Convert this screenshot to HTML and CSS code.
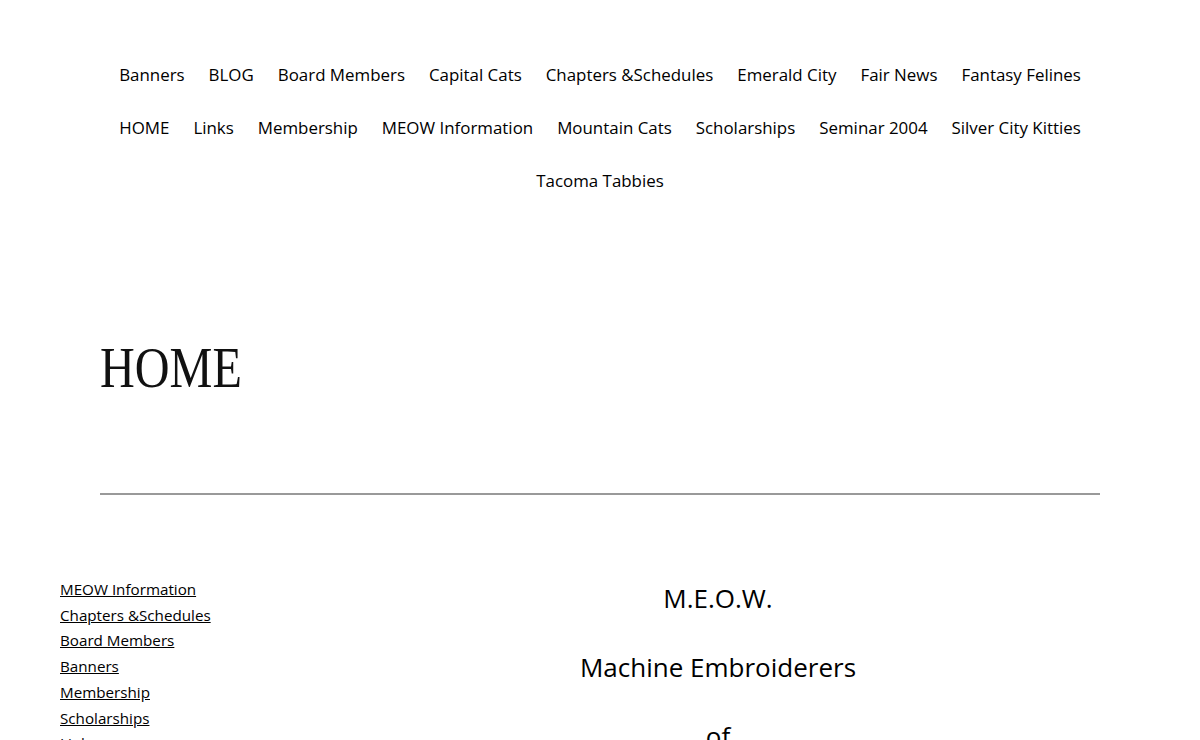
FILE: index.html
```html
<!DOCTYPE html>
<html lang="en">
<head>
<meta charset="utf-8">
<title>HOME</title>
<link rel="stylesheet" href="styles.css">
</head>
<body>
<header class="site-header">
  <nav class="main-nav">
    <ul class="nav-list">
      <li><a href="#">Banners</a></li>
      <li><a href="#">BLOG</a></li>
      <li><a href="#">Board Members</a></li>
      <li><a href="#">Capital Cats</a></li>
      <li><a href="#">Chapters &amp;Schedules</a></li>
      <li><a href="#">Emerald City</a></li>
      <li><a href="#">Fair News</a></li>
      <li><a href="#">Fantasy Felines</a></li>
      <li><a href="#">HOME</a></li>
      <li><a href="#">Links</a></li>
      <li><a href="#">Membership</a></li>
      <li><a href="#">MEOW Information</a></li>
      <li><a href="#">Mountain Cats</a></li>
      <li><a href="#">Scholarships</a></li>
      <li><a href="#">Seminar 2004</a></li>
      <li><a href="#">Silver City Kitties</a></li>
      <li><a href="#">Tacoma Tabbies</a></li>
    </ul>
  </nav>
</header>
<main>
  <div class="title-wrap">
    <h1 class="page-title">HOME</h1>
  </div>
  <hr class="separator">
  <div class="content">
    <ul class="side-links">
      <li><a href="#">MEOW Information</a></li>
      <li><a href="#">Chapters &amp;Schedules</a></li>
      <li><a href="#">Board Members</a></li>
      <li><a href="#">Banners</a></li>
      <li><a href="#">Membership</a></li>
      <li><a href="#">Scholarships</a></li>
      <li><a href="#">Links</a></li>
      <li><a href="#">HOME</a></li>
    </ul>
    <div class="intro">
      <p>M.E.O.W.</p>
      <p>Machine Embroiderers</p>
      <p>of</p>
      <p>Washington</p>
    </div>
  </div>
</main>
</body>
</html>
```
FILE: styles.css
```css
html, body {
  margin: 0;
  padding: 0;
  background: #ffffff;
  color: #000000;
  font-family: "Open Sans", "Noto Sans", sans-serif;
}

a {
  color: #000000;
}

.site-header {
  padding-top: 62px;
}

.main-nav {
  width: 1000px;
  margin: 0 auto;
}

.nav-list {
  list-style: none;
  margin: 0;
  padding: 0;
  display: flex;
  flex-wrap: wrap;
  justify-content: center;
  column-gap: 24px;
  row-gap: 27px;
  font-size: 16.9px;
  line-height: 26px;
}

.nav-list a {
  text-decoration: none;
}

.title-wrap {
  width: 1000px;
  margin: 146px auto 0;
}

.page-title {
  margin: 0;
  font-family: "Liberation Serif", "Times New Roman", serif;
  font-weight: normal;
  font-size: 56px;
  line-height: 56px;
  color: #111111;
  transform: scaleX(0.86);
  transform-origin: left center;
}

.separator {
  width: 1000px;
  margin: 97px auto 0;
  border: 0;
  height: 2px;
  background: #999999;
}

.content {
  display: grid;
  grid-template-columns: 176px 1fr;
  padding-left: 60px;
  margin-top: 81px;
}

.side-links {
  list-style: none;
  margin: 0;
  padding: 0;
  font-size: 15.2px;
  line-height: 25.7px;
  padding-top: 1px;
}

.side-links a {
  text-decoration: underline;
}

.intro {
  text-align: center;
  font-size: 26px;
  line-height: 36px;
  padding-top: 4px;
  display: flex;
  flex-direction: column;
  gap: 33px;
}

.intro p {
  margin: 0;
}
```
